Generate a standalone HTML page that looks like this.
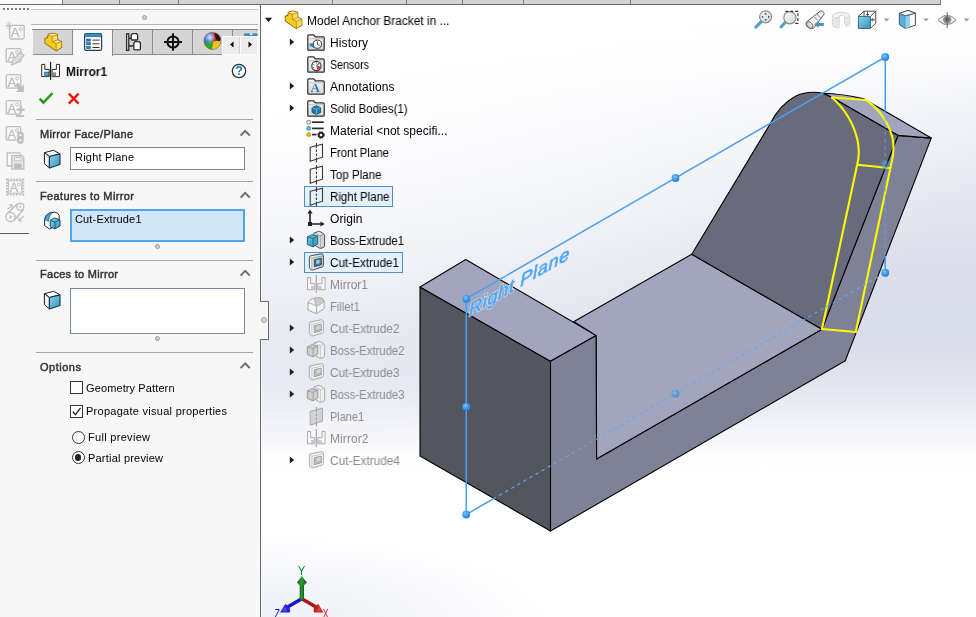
<!DOCTYPE html>
<html lang="en">
<head>
<meta charset="utf-8">
<title>Mirror1 - Model Anchor Bracket</title>
<style>
html,body{margin:0;padding:0;background:#fff;}
body{width:976px;height:617px;overflow:hidden;font-family:"Liberation Sans",sans-serif;}
#app{position:relative;width:976px;height:617px;overflow:hidden;background:#f7f7f7;}
.abs{position:absolute;}
.t{position:absolute;white-space:nowrap;line-height:1;font-size:12px;transform-origin:0 0;will-change:transform;}
#viewport{position:absolute;left:262px;top:5px;width:714px;height:612px;
 background:radial-gradient(ellipse 300px 85px at 0px 612px,rgba(226,229,240,0.55) 0%,rgba(226,229,240,0.3) 50%,rgba(226,229,240,0) 100%),
 radial-gradient(ellipse 730px 340px at 0px 95px,rgba(255,255,255,0.95) 0%,rgba(255,255,255,0.62) 50%,rgba(255,255,255,0.2) 85%,rgba(255,255,255,0) 100%),
 linear-gradient(to bottom,#ffffff 0px,#fcfcfd 55px,#eff1f7 125px,#e4e7f0 195px,#dcdfeb 255px,#d9dce9 330px,#e1e3ee 375px,#f0f1f7 415px,#fcfcfe 450px,#ffffff 470px,#ffffff 612px);}
.sep{position:absolute;left:36px;width:217px;height:1px;background:#a6a6a6;}
.hdr{font-weight:bold;color:#3a3a3a;}
.box{position:absolute;left:70px;width:173px;border:1px solid #7b86a8;background:#fff;}
.tab{position:absolute;top:29px;height:26px;border:1px solid #8c8c8c;border-left:none;background:#d5d5d5;box-sizing:border-box;}
.dot{position:absolute;width:5px;height:5px;border-radius:50%;background:#d0d0d0;border:1px solid #9a9a9a;box-sizing:border-box;}
.cb{position:absolute;left:70px;width:13px;height:13px;box-sizing:border-box;border:1px solid #333;background:#fff;}
.rb{position:absolute;left:71.5px;width:13px;height:13px;box-sizing:border-box;border:1px solid #333;border-radius:50%;background:#fff;}
.sel{position:absolute;box-sizing:border-box;border:1px solid #4d8fc4;background:#e4f0fb;}
svg{position:absolute;overflow:visible;}
</style>
</head>
<body>
<div id="app">
<div id="viewport"></div>
<div class="abs" style="left:0;top:0;width:976px;height:5px;background:#fff;"></div>
<div class="abs" style="left:0;top:0;width:62px;height:4px;background:#f7f7f7;"></div>
<div class="abs" style="left:62px;top:0;width:879px;height:4px;background:#d3d3d3;"></div>
<div class="abs" style="left:62px;top:0;width:1px;height:4px;background:#7d7d7d;"></div>
<div class="abs" style="left:119px;top:0;width:1px;height:4px;background:#7d7d7d;"></div>
<div class="abs" style="left:178px;top:0;width:1px;height:4px;background:#7d7d7d;"></div>
<div class="abs" style="left:332px;top:0;width:1px;height:4px;background:#7d7d7d;"></div>
<div class="abs" style="left:406px;top:0;width:1px;height:4px;background:#7d7d7d;"></div>
<div class="abs" style="left:462px;top:0;width:1px;height:4px;background:#7d7d7d;"></div>
<div class="abs" style="left:523px;top:0;width:1px;height:4px;background:#7d7d7d;"></div>
<div class="abs" style="left:630px;top:0;width:1px;height:4px;background:#7d7d7d;"></div>
<div class="abs" style="left:940px;top:0;width:1px;height:4px;background:#7d7d7d;"></div>
<div class="abs" style="left:0;top:4px;width:941px;height:1px;background:#6e6e6e;"></div>
<div class="abs" style="left:31px;top:5px;width:227px;height:1px;background:#9fc0c8;"></div>
<div class="abs" style="left:0;top:5px;width:261px;height:612px;background:#f7f7f7;"></div>
<div class="abs" style="left:31px;top:6px;width:227px;height:3px;background:#fff;"></div>
<div class="abs" style="left:2.5px;top:7.5px;width:2px;height:2px;background:#7a7a7a;"></div>
<div class="abs" style="left:6.5px;top:7.5px;width:2px;height:2px;background:#7a7a7a;"></div>
<div class="abs" style="left:10.5px;top:7.5px;width:2px;height:2px;background:#7a7a7a;"></div>
<div class="abs" style="left:14.5px;top:7.5px;width:2px;height:2px;background:#7a7a7a;"></div>
<div class="abs" style="left:18.5px;top:7.5px;width:2px;height:2px;background:#7a7a7a;"></div>
<div class="abs" style="left:22.5px;top:7.5px;width:2px;height:2px;background:#7a7a7a;"></div>
<div class="abs" style="left:26.5px;top:7.5px;width:2px;height:2px;background:#7a7a7a;"></div>
<div class="abs" style="left:31px;top:9px;width:227px;height:1px;background:#c4c4c4;"></div>
<div class="abs" style="left:31px;top:24px;width:227px;height:1px;background:#b4b4b4;"></div>
<div class="abs" style="left:31px;top:25px;width:227px;height:4px;background:#fbfbfb;"></div>
<div class="dot" style="left:141.5px;top:14.5px;"></div>
<div class="abs" style="left:0;top:233px;width:29px;height:1px;background:#5a5a5a;"></div>
<svg style="left:0;top:0;" width="976" height="617"><path d="M260.5 5 V301.5 H268.5 V339.5 H260.5 V617" fill="none" stroke="#6a6a6a" stroke-width="1"/><path d="M261 301.5 H268 V339.5 H261 Z" fill="#f7f7f7" stroke="none"/><path d="M260.5 301.5 H268.5 V339.5 H260.5" fill="none" stroke="#6a6a6a" stroke-width="1"/><circle cx="264" cy="320" r="2.6" fill="#cfcfcf" stroke="#999" stroke-width="0.8"/></svg>
<div class="abs" style="left:32px;top:29px;width:226px;height:1px;background:#8c8c8c;"></div>
<div class="tab" style="left:33px;width:40px;"></div>
<div class="tab" style="left:73px;width:40px;background:#f8f8f8;border-bottom:none;height:27px;"></div>
<div class="tab" style="left:113px;width:40px;"></div>
<div class="tab" style="left:153px;width:40px;"></div>
<div class="tab" style="left:193px;width:40px;"></div>
<div class="tab" style="left:233px;width:25px;border-right:none;"></div>
<div class="abs" style="left:222px;top:36px;width:36px;height:19px;background:#ececec;border:1px solid #fcfcfc;box-sizing:border-box;"></div>
<div class="abs" style="left:240px;top:37px;width:1px;height:17px;background:#fcfcfc;"></div>
<div class="abs" style="left:239px;top:37px;width:1px;height:17px;background:#d0d0d0;"></div>
<svg style="left:222px;top:36px;" width="36" height="19"><path d="M11.5 5.5 L8 8.5 L11.5 11.5 Z" fill="#000"/><path d="M26.5 5.5 L30 8.5 L26.5 11.5 Z" fill="#000"/></svg>
<span class="t " style="left:66.00px;top:65.84px;font-size:12px;color:#111;transform:scaleX(0.9916);font-weight:bold;">Mirror1</span>
<span class="t " style="left:40.00px;top:128.69px;font-size:11px;color:#333;letter-spacing:0.349px;-webkit-text-stroke:0.45px #333;">Mirror Face/Plane</span>
<span class="t " style="left:40.00px;top:190.69px;font-size:11px;color:#333;letter-spacing:0.388px;-webkit-text-stroke:0.45px #333;">Features to Mirror</span>
<span class="t " style="left:40.00px;top:268.69px;font-size:11px;color:#333;letter-spacing:0.289px;-webkit-text-stroke:0.45px #333;">Faces to Mirror</span>
<span class="t " style="left:40.00px;top:361.69px;font-size:11px;color:#333;letter-spacing:0.515px;-webkit-text-stroke:0.45px #333;">Options</span>
<div class="sep" style="top:119px;"></div>
<div class="sep" style="top:181px;"></div>
<div class="sep" style="top:260px;"></div>
<div class="sep" style="top:352px;"></div>
<svg style="left:0;top:0;" width="262" height="400"><path d="M240.6 135.6 L245.2 130.89999999999998 L249.8 135.6" fill="none" stroke="#6c6c6c" stroke-width="2"/></svg>
<svg style="left:0;top:0;" width="262" height="400"><path d="M240.6 197.6 L245.2 192.89999999999998 L249.8 197.6" fill="none" stroke="#6c6c6c" stroke-width="2"/></svg>
<svg style="left:0;top:0;" width="262" height="400"><path d="M240.6 275.59999999999997 L245.2 270.9 L249.8 275.59999999999997" fill="none" stroke="#6c6c6c" stroke-width="2"/></svg>
<svg style="left:0;top:0;" width="262" height="400"><path d="M240.6 368.09999999999997 L245.2 363.4 L249.8 368.09999999999997" fill="none" stroke="#6c6c6c" stroke-width="2"/></svg>
<div class="box" style="top:147px;height:21px;"></div>
<span class="t " style="left:74.70px;top:151.99px;font-size:11px;color:#000;letter-spacing:0.213px;">Right Plane</span>
<div class="box" style="top:209px;height:29px;border:2px solid #4fa6ec;background:#d0e5f8;width:171px;"></div>
<span class="t " style="left:74.70px;top:213.99px;font-size:11px;color:#000;letter-spacing:0.154px;">Cut-Extrude1</span>
<div class="box" style="top:288px;height:44px;"></div>
<div class="dot" style="left:154.5px;top:243.5px;"></div>
<div class="dot" style="left:154.5px;top:335.5px;"></div>
<div class="cb" style="top:381px;"></div>
<div class="cb" style="top:405px;"></div>
<svg style="left:70px;top:405px;" width="13" height="13"><path d="M2.8 6.6 L5.3 9.6 L10.6 2.8" fill="none" stroke="#222" stroke-width="1.3"/></svg>
<span class="t " style="left:86.20px;top:382.99px;font-size:11px;color:#000;letter-spacing:0.113px;">Geometry Pattern</span>
<span class="t " style="left:85.70px;top:405.99px;font-size:11px;color:#000;letter-spacing:0.273px;">Propagate visual properties</span>
<div class="rb" style="top:430.5px;"></div>
<div class="rb" style="top:451px;"></div>
<div class="abs" style="left:74.7px;top:454.2px;width:6.6px;height:6.6px;border-radius:50%;background:#222;"></div>
<span class="t " style="left:88.20px;top:431.99px;font-size:11px;color:#000;letter-spacing:0.302px;">Full preview</span>
<span class="t " style="left:88.20px;top:452.99px;font-size:11px;color:#000;letter-spacing:0.205px;">Partial preview</span>
<svg id="panelicons" style="left:0;top:0;" width="976" height="617" viewBox="0 0 976 617">
<defs>
<linearGradient id="pcube" x1="0" y1="0" x2="1" y2="1"><stop offset="0" stop-color="#8fd0ea"/><stop offset="1" stop-color="#3a93c0"/></linearGradient>
<linearGradient id="pyel" x1="0" y1="0" x2="1" y2="1"><stop offset="0" stop-color="#ffe96e"/><stop offset="1" stop-color="#e6ae08"/></linearGradient>
<linearGradient id="lens" x1="0" y1="0" x2="1" y2="1"><stop offset="0" stop-color="#ffffff"/><stop offset="1" stop-color="#cfd6dc"/></linearGradient>
<radialGradient id="ballhi" cx="35%" cy="30%" r="70%"><stop offset="0" stop-color="#ffffff" stop-opacity="0.85"/><stop offset="0.5" stop-color="#ffffff" stop-opacity="0"/></radialGradient>
</defs>
<rect x="9.6" y="25.4" width="14.6" height="13.6" rx="1.5" fill="#f7f7f7" stroke="#bebebe" stroke-width="1.3"/>
<text x="10.799999999999999" y="37.3" font-family="Liberation Sans, sans-serif" font-size="13" fill="#bebebe" stroke="#bebebe" stroke-width="0.3">A</text>
<circle cx="20.6" cy="29.2" r="1.6" fill="#f7f7f7" stroke="#bebebe" stroke-width="1"/>
<path d="M9 21.6 V30.4 M5.2 25.6 H12.8 M6.4 23 L11.6 28.2 M11.6 23 L6.4 28.2" stroke="#bebebe" stroke-width="0.9" fill="none"/>
<rect x="6.2" y="48.6" width="14.6" height="13.6" rx="1.5" fill="#f7f7f7" stroke="#bebebe" stroke-width="1.3"/>
<text x="7.4" y="60.5" font-family="Liberation Sans, sans-serif" font-size="13" fill="#bebebe" stroke="#bebebe" stroke-width="0.3">A</text>
<circle cx="17.2" cy="52.4" r="1.6" fill="#f7f7f7" stroke="#bebebe" stroke-width="1"/>
<path d="M11.6 64.8 L13 59.6 L20.6 52.6 L24 55.6 L16.6 63 Z" fill="#dedede" stroke="#bebebe" stroke-width="1.2"/>
<rect x="6.2" y="74.6" width="14.6" height="13.6" rx="1.5" fill="#f7f7f7" stroke="#bebebe" stroke-width="1.3"/>
<text x="7.4" y="86.5" font-family="Liberation Sans, sans-serif" font-size="13" fill="#bebebe" stroke="#bebebe" stroke-width="0.3">A</text>
<circle cx="17.2" cy="78.39999999999999" r="1.6" fill="#f7f7f7" stroke="#bebebe" stroke-width="1"/>
<path d="M15.6 84.8 L17.8 82.6 L21.6 86.4 L23.8 84.2 V92 H16 L18.2 89.8 Z" fill="#bebebe"/>
<rect x="6.2" y="100.6" width="14.6" height="13.6" rx="1.5" fill="#f7f7f7" stroke="#bebebe" stroke-width="1.3"/>
<text x="7.4" y="112.5" font-family="Liberation Sans, sans-serif" font-size="13" fill="#bebebe" stroke="#bebebe" stroke-width="0.3">A</text>
<circle cx="17.2" cy="104.39999999999999" r="1.6" fill="#f7f7f7" stroke="#bebebe" stroke-width="1"/>
<path d="M20.6 105.6 V113.6 M16.6 109.6 H24.6 M15.8 116 H24.2" stroke="#bebebe" stroke-width="2.1" fill="none"/>
<rect x="6.2" y="126.6" width="14.6" height="13.6" rx="1.5" fill="#f7f7f7" stroke="#bebebe" stroke-width="1.3"/>
<text x="7.4" y="138.5" font-family="Liberation Sans, sans-serif" font-size="13" fill="#bebebe" stroke="#bebebe" stroke-width="0.3">A</text>
<circle cx="17.2" cy="130.4" r="1.6" fill="#f7f7f7" stroke="#bebebe" stroke-width="1"/>
<rect x="17.2" y="131.4" width="6.4" height="12.4" rx="2.8" fill="#bebebe"/><circle cx="20.4" cy="135" r="1.2" fill="#ececec"/><circle cx="20.4" cy="140.2" r="1.2" fill="#ececec"/>
<path d="M11 166 H7.2 V152.8 H20 V155" fill="none" stroke="#bebebe" stroke-width="1.3"/>
<path d="M11.8 155.6 H22 L23.8 157.4 V169 H11.8 Z" fill="#e6e6e6" stroke="#bebebe" stroke-width="1.3"/><rect x="14.4" y="157.6" width="6.6" height="3.2" fill="#f4f4f4" stroke="#bebebe" stroke-width="0.8"/><rect x="14" y="163.6" width="7.6" height="5" fill="#bebebe"/>
<rect x="7.2" y="179.6" width="15.8" height="14.8" fill="#f7f7f7" stroke="#bebebe" stroke-width="2.4" stroke-dasharray="1.7 1.3"/>
<rect x="8.4" y="180.8" width="13.4" height="12.4" fill="#f7f7f7" stroke="#bebebe" stroke-width="0.9"/>
<text x="9.8" y="192.4" font-family="Liberation Sans, sans-serif" font-size="12.5" fill="#bebebe" stroke="#bebebe" stroke-width="0.3">A</text>
<circle cx="18.8" cy="184.6" r="1.5" fill="#f7f7f7" stroke="#bebebe" stroke-width="0.9"/>
<path d="M6.8 213.8 L17.6 203.8 M13.6 221 L23.6 209.2" stroke="#bebebe" stroke-width="1.4" fill="none"/>
<circle cx="10.5" cy="217" r="4.6" fill="#f7f7f7" stroke="#bebebe" stroke-width="1.4"/><circle cx="10.5" cy="217" r="1.3" fill="#bebebe"/>
<circle cx="20.3" cy="206.8" r="3.5" fill="#f7f7f7" stroke="#bebebe" stroke-width="1.4"/><circle cx="20.3" cy="206.8" r="1.1" fill="#bebebe"/>
<path d="M7.3 209.7 L12.2 204.8 M12.2 204.8 H8.8 M12.2 204.8 V208.2 M24 215.9 L18.8 221 M18.8 221 H22.2 M18.8 221 V217.6" stroke="#bebebe" stroke-width="1.1" fill="none"/>
<use href="#part" x="41.8" y="30.2" width="24" height="24"/>
<g transform="translate(84,33)"><rect x="0.6" y="0.6" width="17" height="16.8" rx="1.6" fill="#fdfdfd" stroke="#1f3f55" stroke-width="1.2"/><path d="M0.6 2.2 Q0.6 0.6 2.2 0.6 H16 Q17.6 0.6 17.6 2.2 V3.6 H0.6 Z" fill="#3c8fc0" stroke="#1f5f88" stroke-width="0.8"/>
<rect x="2.6" y="6.0" width="4" height="2.2" fill="#2f86bb" stroke="#1b4f70" stroke-width="0.5"/><path d="M8.4 7.1 H15.6" stroke="#333" stroke-width="1"/>
<rect x="2.6" y="9.7" width="4" height="2.2" fill="#2f86bb" stroke="#1b4f70" stroke-width="0.5"/><path d="M8.4 10.799999999999999 H15.6" stroke="#333" stroke-width="1"/>
<rect x="2.6" y="13.4" width="4" height="2.2" fill="#2f86bb" stroke="#1b4f70" stroke-width="0.5"/><path d="M8.4 14.5 H15.6" stroke="#333" stroke-width="1"/>
</g>
<g fill="#fff" stroke="#2b2b2b" stroke-width="1.3"><rect x="126.6" y="33.8" width="2.2" height="16.6" fill="#f0f0f0"/><path d="M128.8 38.4 H131.4 M128.8 46 H134" fill="none"/><path d="M131.2 35.2 L132.4 33.6 H136.6 L137.6 35 V39.2 Q137.6 40 136.8 40 H132 Q131.2 40 131.2 39.2 Z"/><path d="M133.8 43.2 L135 41.6 H139.4 L140.4 43 V48.8 Q140.4 49.8 139.4 49.8 H134.8 Q133.8 49.8 133.8 48.8 Z"/></g>
<g fill="none" stroke="#111" stroke-width="2"><circle cx="173" cy="42" r="5.6"/><path d="M164 42 H182 M173 33.2 V50.8"/></g>
<g><clipPath id="ballclip"><circle cx="212.5" cy="40.8" r="8.6"/></clipPath><g clip-path="url(#ballclip)"><rect x="203" y="31" width="20" height="20" fill="#d81e1e"/><path d="M203 31 H212 L213.5 42 L203 43 Z" fill="#2a66d8"/><path d="M203 42.5 L213.5 41.5 L212 51 H203 Z" fill="#2fa52f"/><path d="M213.5 41.5 L223 40 V51 H211.5 Z" fill="#f1c40f"/><ellipse cx="217.6" cy="37" rx="2.4" ry="4.4" transform="rotate(-25 217.6 37)" fill="#1a1a1a"/><circle cx="212.5" cy="40.8" r="8.6" fill="url(#ballhi)"/></g><circle cx="212.5" cy="40.8" r="8.6" fill="none" stroke="#7a7a7a" stroke-width="0.6"/></g>
<path d="M244 33.4 H257.5 V36 H244 Z" fill="#3c8fc0"/><path d="M250 33.4 H252.4 V35 H250Z" fill="#fff"/>
<g transform="translate(41.2,61.6) scale(1.0)"><path d="M9.4 0.3 V18.3" stroke="#111" stroke-width="1.1" fill="none"/><path d="M0.5 2.8 H3.6 V7.8 H8 V15 H0.5 Z" fill="#fcfcfc" stroke="#2b2b2b" stroke-width="1"/><rect x="3.6" y="10.6" width="4" height="4" fill="#4aa3d2" stroke="#1b5d82" stroke-width="0.8"/><path d="M18.3 2.8 H15.2 V7.8 H10.9 V15 H18.3 Z" fill="#fcfcfc" stroke="#2b2b2b" stroke-width="1"/><rect x="11.3" y="10.8" width="3.6" height="3.8" fill="#8a8a8a"/></g>
<circle cx="239" cy="71" r="6.7" fill="#fdfdfd" stroke="#1f2d3a" stroke-width="1.2"/>
<text x="235.3" y="75.4" font-family="Liberation Sans, sans-serif" font-weight="bold" font-size="12.5" fill="#1f6fa8">?</text>
<path d="M39.8 98.6 L43.4 102.6 L52.4 93.2" fill="none" stroke="#2f9a12" stroke-width="2.5"/>
<path d="M68.8 93.6 L78.6 103.6 M78.6 93.6 L68.8 103.6" fill="none" stroke="#e11c0c" stroke-width="2.4"/>
<g transform="translate(44,149.9)" stroke-linejoin="round"><path d="M0.4 2.8 L9.6 0.4 L16 4 L5.4 6.6 Z" fill="#ffffff" stroke="#1e1e1e" stroke-width="1"/><path d="M0.4 2.8 L5.4 6.6 V18 L0.4 13.8 Z" fill="#f2f2f2" stroke="#1e1e1e" stroke-width="1"/><path d="M5.4 6.6 L16 4 V14.6 L5.4 18 Z" fill="url(#pcube)" stroke="#12384e" stroke-width="1.1"/></g>
<g transform="translate(44,290.9)" stroke-linejoin="round"><path d="M0.4 2.8 L9.6 0.4 L16 4 L5.4 6.6 Z" fill="#ffffff" stroke="#1e1e1e" stroke-width="1"/><path d="M0.4 2.8 L5.4 6.6 V18 L0.4 13.8 Z" fill="#f2f2f2" stroke="#1e1e1e" stroke-width="1"/><path d="M5.4 6.6 L16 4 V14.6 L5.4 18 Z" fill="url(#pcube)" stroke="#12384e" stroke-width="1.1"/></g>
<g transform="translate(44,211.6)" stroke-linejoin="round"><path d="M0.6 8 Q0.8 3.4 5 1.6 L10.6 0.5 Q14.6 1 15.2 4 V12.6 L5.6 17.4 L0.6 14 Z" fill="#fbfbfb" stroke="#2a2a2a" stroke-width="1"/><path d="M0.9 8 Q1.2 3.6 5 1.8 L8.4 1.1 Q4.6 3.4 4.4 9.6 Z" fill="#4aa6d6" stroke="#1b5d82" stroke-width="0.8"/><path d="M6.2 8.8 L10.6 6.4 L16 8.2 V14.4 L11 17.2 L6.2 15.4 Z" fill="url(#pcube)" stroke="#12506e" stroke-width="1"/><path d="M6.2 8.8 L11 10.6 L16 8.2 M11 10.6 V17.2" fill="none" stroke="#12506e" stroke-width="0.9"/></g>
<g><path d="M761.4 21.4 L755.8 27.2" stroke="#4f9cc4" stroke-width="3" stroke-linecap="round"/><circle cx="765.6" cy="16.8" r="6" fill="url(#lens)" stroke="#8b8b8b" stroke-width="1.2"/><path d="M765.6 12.6 L767 14.4 H764.2 Z M765.6 21 L767 19.2 H764.2 Z M761.4 16.8 L763.2 15.4 V18.2 Z M769.8 16.8 L768 15.4 V18.2 Z" fill="#444"/></g>
<g><path d="M785.8 21.8 L781 27" stroke="#4f9cc4" stroke-width="3" stroke-linecap="round"/><circle cx="789.9" cy="17.7" r="6.1" fill="url(#lens)" stroke="#8b8b8b" stroke-width="1.2"/><path d="M785.4 11.4 H797.9 V23.4 H794" fill="none" stroke="#333" stroke-width="1.1" stroke-dasharray="3 1.8"/></g>
<g><path d="M806.3 22 L820.4 11 Q822.6 10.6 823.6 12.2 Q824.6 13.4 823.8 14.6 L813.6 28.2 Q810 29.6 807.4 27 Q805.2 24.6 806.3 22 Z" fill="#f4f4f4" stroke="#5a5a5a" stroke-width="1"/><path d="M813.4 16.4 L818.2 20.6 M816.6 14 L821 18" stroke="#7a7a7a" stroke-width="0.9" fill="none"/><ellipse cx="809.8" cy="25" rx="2.5" ry="3.7" transform="rotate(-42 809.8 25)" fill="#dcdcdc" stroke="#6a6a6a" stroke-width="0.9"/><path d="M814 24.4 L818.6 21 V22.9 H823.8 V25.9 H818.6 V27.8 Z" fill="#4a94b8"/></g>
<g stroke="#d6d6d6" stroke-width="1"><path d="M832.4 16.4 Q833 12.6 841 12.2 Q849.4 12.6 849.8 16.4 V24.2 Q849.2 26 846 26.6 V24 H844.6 V17 Q844 15.4 841.4 15.4 Q839.4 15.4 839.2 17 V27.6 Q834 28.4 832.4 25 Z" fill="#f2f2f2"/><path d="M833.4 21 L838.4 17.2 M833.4 24 L838.4 20.2 M834.2 26.6 L838.6 23.2 M845.4 19.8 L849 17 M845.4 22.8 L849 20 M845.6 25.6 L849 23" fill="none" stroke="#dadada" stroke-width="1.2"/><path d="M832.4 16.4 Q836 19.2 839.2 18.4 M844.6 17.6 Q848 17.8 849.8 16.4" fill="none"/></g>
<g stroke-linejoin="round"><path d="M858.4 16.4 L864 11.2 H875.8 V23.2 L870.4 28.4" fill="#fdfdfd" stroke="#4a4a4a" stroke-width="1"/><path d="M870.4 16.4 L875.8 11.2 M864 11.2 V16" stroke="#4a4a4a" stroke-width="1" fill="none"/><rect x="858.4" y="16.4" width="12" height="12" fill="url(#pcube)" stroke="#2b6a8a" stroke-width="1"/><path d="M867.6 12 V15.4 M866.2 14 L867.6 15.6 L869 14 M875 19.8 H871.6 M873 18.4 L871.4 19.8 L873 21.2" stroke="#333" stroke-width="0.9" fill="none"/></g>
<g stroke-linejoin="round"><path d="M899.4 13.4 L908 10.4 L915.4 13.2 V25.2 L905.4 28.4 L899.4 24.6 Z" fill="#fafafa" stroke="#4a4a4a" stroke-width="1"/><path d="M899.4 13.4 L905.4 15.8 V28.4 L899.4 24.6 Z" fill="#5aaed8" stroke="#2b6a8a" stroke-width="0.8"/><path d="M905.4 15.8 L910 14.6 V26.8 L905.4 28.4 Z" fill="#8fd0ea"/><path d="M905.4 15.8 L915.4 13.2" stroke="#4a4a4a" stroke-width="0.9" fill="none"/><path d="M899.4 13.4 L908 10.4 L915.4 13.2 L905.4 15.8 Z" fill="#e4f2f9" stroke="#4a4a4a" stroke-width="0.8"/></g>
<g><path d="M938.4 20 Q947 10.4 955.8 20 Q947 29 938.4 20 Z" fill="#f2f2f2" stroke="#9c9c9c" stroke-width="1.1"/><circle cx="947.2" cy="19.6" r="4.2" fill="#8f8f8f"/><circle cx="947.2" cy="19.6" r="2" fill="#5c5c5c"/><path d="M947.2 12 V28.2" stroke="#6a6a6a" stroke-width="1"/></g>
<path d="M883.7 18.6 H889.3 L886.5 21.6 Z" fill="#9a9a9a"/>
<path d="M923.2 18.6 H928.8 L926 21.6 Z" fill="#9a9a9a"/>
<path d="M963.7 18.6 H969.3 L966.5 21.6 Z" fill="#9a9a9a"/>
</svg>
<div class="sel" style="left:304px;top:186px;width:89px;height:21px;"></div>
<div class="sel" style="left:304px;top:252px;width:98.5px;height:21px;"></div>
<span class="t " style="left:307.00px;top:14.84px;font-size:12px;color:#000;transform:scaleX(0.9937);">Model Anchor Bracket in ...</span>
<span class="t " style="left:330.00px;top:36.84px;font-size:12px;color:#000;letter-spacing:0.111px;">History</span>
<span class="t " style="left:330.00px;top:58.84px;font-size:12px;color:#000;transform:scaleX(0.8859);">Sensors</span>
<span class="t " style="left:330.00px;top:80.84px;font-size:12px;color:#000;letter-spacing:0.112px;">Annotations</span>
<span class="t " style="left:330.00px;top:102.84px;font-size:12px;color:#000;transform:scaleX(0.9524);">Solid Bodies(1)</span>
<span class="t " style="left:330.00px;top:124.84px;font-size:12px;color:#000;letter-spacing:0.019px;">Material &lt;not specifi...</span>
<span class="t " style="left:330.00px;top:146.84px;font-size:12px;color:#000;transform:scaleX(0.9511);">Front Plane</span>
<span class="t " style="left:330.00px;top:168.84px;font-size:12px;color:#000;transform:scaleX(0.9649);">Top Plane</span>
<span class="t " style="left:330.00px;top:190.84px;font-size:12px;color:#000;transform:scaleX(0.9591);">Right Plane</span>
<span class="t " style="left:330.00px;top:212.84px;font-size:12px;color:#000;letter-spacing:0.098px;">Origin</span>
<span class="t " style="left:330.00px;top:234.84px;font-size:12px;color:#000;transform:scaleX(0.9402);">Boss-Extrude1</span>
<span class="t " style="left:330.00px;top:256.84px;font-size:12px;color:#000;transform:scaleX(0.9760);">Cut-Extrude1</span>
<span class="t " style="left:330.00px;top:278.84px;font-size:12px;color:#8c8c8c;">Mirror1</span>
<span class="t " style="left:330.00px;top:300.84px;font-size:12px;color:#8c8c8c;transform:scaleX(0.9373);">Fillet1</span>
<span class="t " style="left:330.00px;top:322.84px;font-size:12px;color:#8c8c8c;transform:scaleX(0.9830);">Cut-Extrude2</span>
<span class="t " style="left:330.00px;top:344.84px;font-size:12px;color:#8c8c8c;transform:scaleX(0.9466);">Boss-Extrude2</span>
<span class="t " style="left:330.00px;top:366.84px;font-size:12px;color:#8c8c8c;transform:scaleX(0.9830);">Cut-Extrude3</span>
<span class="t " style="left:330.00px;top:388.84px;font-size:12px;color:#8c8c8c;transform:scaleX(0.9466);">Boss-Extrude3</span>
<span class="t " style="left:330.00px;top:410.84px;font-size:12px;color:#8c8c8c;transform:scaleX(0.9100);">Plane1</span>
<span class="t " style="left:330.00px;top:432.84px;font-size:12px;color:#8c8c8c;letter-spacing:0.083px;">Mirror2</span>
<span class="t " style="left:330.00px;top:454.84px;font-size:12px;color:#8c8c8c;transform:scaleX(0.9901);">Cut-Extrude4</span>
<svg id="treeicons" style="left:0;top:0;" width="976" height="617" viewBox="0 0 976 617">
<defs>
<linearGradient id="fg" x1="0" y1="0" x2="0" y2="1"><stop offset="0" stop-color="#fafafa"/><stop offset="1" stop-color="#d6d6d6"/></linearGradient>
<linearGradient id="cubeg" x1="0" y1="0" x2="1" y2="1"><stop offset="0" stop-color="#7cc6e4"/><stop offset="1" stop-color="#2c8fbd"/></linearGradient>
<linearGradient id="plateg" x1="0" y1="0" x2="1" y2="0"><stop offset="0" stop-color="#ffffff"/><stop offset="1" stop-color="#c9c9c9"/></linearGradient>
<linearGradient id="yel" x1="0" y1="0" x2="1" y2="1"><stop offset="0" stop-color="#ffe86a"/><stop offset="1" stop-color="#e9b40c"/></linearGradient>
<symbol id="folder" viewBox="0 0 18 17" overflow="visible">
 <path d="M0.6 15.6 V1.8 Q0.6 0.7 1.7 0.7 H6 Q7 0.7 7.6 1.6 L8.2 2.6 H16.3 Q17.4 2.6 17.4 3.7 V15.6 Q17.4 16.3 16.6 16.3 H1.4 Q0.6 16.3 0.6 15.6 Z" fill="url(#fg)" stroke="#333" stroke-width="1.3"/>
 <path d="M1.6 4.6 H16.4" stroke="#bdbdbd" stroke-width="1" fill="none"/>
</symbol>
<symbol id="plane" viewBox="0 0 18 20" overflow="visible">
 <path d="M3.2 4.5 L15.5 1.3 V14.4 L3.2 18.4 Z" fill="none" stroke="#3a3a3a" stroke-width="1.1"/>
 <path d="M9.4 0.2 V5.2 M9.4 6.8 V9.2 M9.4 10.8 V13.2 M9.4 14.6 V19.6" stroke="#3a3a3a" stroke-width="1.1" fill="none"/>
</symbol>
<symbol id="planeg" viewBox="0 0 18 20" overflow="visible">
 <path d="M3.2 4.5 L15.5 1.3 V14.4 L3.2 18.4 Z" fill="#d2d2d2" stroke="#aaaaaa" stroke-width="1"/>
 <path d="M9.4 0.2 V5.2 M9.4 6.8 V9.2 M9.4 10.8 V13.2 M9.4 14.6 V19.6" stroke="#9c9c9c" stroke-width="1" fill="none"/>
</symbol>
<symbol id="boss" viewBox="0 0 19 19" overflow="visible">
 <path d="M7.2 2.2 L12.4 0.6 Q13 0.4 13.6 0.8 L17.6 3.4 Q18.2 3.8 18.2 4.6 V15.6 Q18.2 16.3 17.6 16.6 L14.4 18 Q13.8 18.2 13.2 17.8 L7.2 14 Z" fill="url(#plateg)" stroke="#4a4a4a" stroke-width="1"/>
 <path d="M13.8 5.2 V17.6 M13.8 5.2 L17.8 3.6 M13.8 5.2 L8 2.4" fill="none" stroke="#8a8a8a" stroke-width="0.8"/>
 <path d="M0.6 6.2 L5.2 4 L11.2 5.4 V13.6 L6.4 16.4 L0.6 14 Z" fill="url(#cubeg)" stroke="#1d5f80" stroke-width="1"/>
 <path d="M0.6 6.2 L6.4 7.8 L11.2 5.4 M6.4 7.8 V16.4" fill="none" stroke="#1d5f80" stroke-width="0.9"/>
</symbol>
<symbol id="bossg" viewBox="0 0 19 19" overflow="visible">
 <path d="M7.2 2.2 L12.4 0.6 Q13 0.4 13.6 0.8 L17.6 3.4 Q18.2 3.8 18.2 4.6 V15.6 Q18.2 16.3 17.6 16.6 L14.4 18 Q13.8 18.2 13.2 17.8 L7.2 14 Z" fill="#f1f1f1" stroke="#a6a6a6" stroke-width="1"/>
 <path d="M13.8 5.2 V17.6 M13.8 5.2 L17.8 3.6 M13.8 5.2 L8 2.4" fill="none" stroke="#b8b8b8" stroke-width="0.8"/>
 <path d="M0.6 6.2 L5.2 4 L11.2 5.4 V13.6 L6.4 16.4 L0.6 14 Z" fill="#cfcfcf" stroke="#9a9a9a" stroke-width="1"/>
 <path d="M0.6 6.2 L6.4 7.8 L11.2 5.4 M6.4 7.8 V16.4" fill="none" stroke="#9a9a9a" stroke-width="0.9"/>
</symbol>
<symbol id="cut" viewBox="0 0 16 18" overflow="visible">
 <path d="M0.8 4 Q0.8 3 1.8 2.7 L12.8 0.6 Q14 0.4 14.6 1.2 Q15.2 1.8 15.2 2.8 V12.6 Q15.2 13.6 14.2 14 L4.2 17.2 Q3.2 17.5 2.4 16.8 L1.4 15.8 Q0.8 15.2 0.8 14.2 Z" fill="url(#plateg)" stroke="#4a4a4a" stroke-width="1"/>
 <path d="M3.4 5.2 L14.4 2.8 M3.4 5.2 V16.8 M3.4 5.2 L1.2 3.2" fill="none" stroke="#8a8a8a" stroke-width="0.8"/>
 <path d="M5.8 6.6 L13 5.2 V11.8 L5.8 13.8 Z" fill="#3b9ac9" stroke="#3d3d3d" stroke-width="1"/>
 <path d="M7.6 7.4 V11.6 L11 10.8 V6.8 Z" fill="#9bd2ea" stroke="none"/>
 <path d="M7.4 6.4 V11.8 L12.8 10.4" fill="none" stroke="#1d5f80" stroke-width="0.8"/>
</symbol>
<symbol id="cutg" viewBox="0 0 16 18" overflow="visible">
 <path d="M0.8 4 Q0.8 3 1.8 2.7 L12.8 0.6 Q14 0.4 14.6 1.2 Q15.2 1.8 15.2 2.8 V12.6 Q15.2 13.6 14.2 14 L4.2 17.2 Q3.2 17.5 2.4 16.8 L1.4 15.8 Q0.8 15.2 0.8 14.2 Z" fill="#f3f3f3" stroke="#a8a8a8" stroke-width="1"/>
 <path d="M3.4 5.2 L14.4 2.8 M3.4 5.2 V16.8 M3.4 5.2 L1.2 3.2" fill="none" stroke="#bcbcbc" stroke-width="0.8"/>
 <path d="M5.8 6.6 L13 5.2 V11.8 L5.8 13.8 Z" fill="#d4d4d4" stroke="#9a9a9a" stroke-width="1"/>
 <path d="M7.4 6.4 V11.8 L12.8 10.4" fill="none" stroke="#9a9a9a" stroke-width="0.8"/>
</symbol>
<symbol id="mirg" viewBox="0 0 19 19" overflow="visible">
 <path d="M9.4 0.5 V18.7" stroke="#9a9a9a" stroke-width="1" fill="none"/>
 <path d="M0.5 3.2 H3.6 V9.4 H7.8 V15.5 H0.5 Z" fill="#fafafa" stroke="#a8a8a8" stroke-width="1"/>
 <rect x="4" y="11.6" width="3.4" height="3.6" fill="#c9c9c9"/>
 <path d="M18.3 3.2 H15.2 V9.4 H11 V15.5 H18.3 Z" fill="#fafafa" stroke="#a8a8a8" stroke-width="1"/>
 <rect x="11.4" y="11.6" width="3.4" height="3.6" fill="#c9c9c9"/>
</symbol>
<symbol id="mir" viewBox="0 0 19 19" overflow="visible">
 <path d="M9.4 0.5 V18.7" stroke="#222" stroke-width="1.1" fill="none"/>
 <path d="M0.5 3.2 H3.6 V9.4 H7.8 V15.5 H0.5 Z" fill="#fcfcfc" stroke="#333" stroke-width="1"/>
 <rect x="4" y="11.4" width="3.4" height="3.7" fill="#3f97c8"/>
 <path d="M18.3 3.2 H15.2 V9.4 H11 V15.5 H18.3 Z" fill="#fcfcfc" stroke="#333" stroke-width="1"/>
 <rect x="11.4" y="11.4" width="3.4" height="3.7" fill="#8a8a8a"/>
</symbol>
<symbol id="filg" viewBox="0 0 18 18" overflow="visible">
 <path d="M0.8 6 Q2 1.6 8 0.9 L13.4 0.7 Q17 1.4 17.4 4.6 V11.6 L9.6 16.9 L0.8 13.2 Z" fill="#f4f4f4" stroke="#a6a6a6" stroke-width="1"/>
 <path d="M8 0.9 Q6.6 3.2 9.6 9.4 L17.4 4.8 Q16.6 1.4 13.4 0.7 Z" fill="#cdcdcd" stroke="#a6a6a6" stroke-width="0.8"/>
 <path d="M0.8 6.2 Q4 5.6 9.6 9.4 V16.9" fill="none" stroke="#a6a6a6" stroke-width="0.9"/>
</symbol>
<symbol id="part" viewBox="0 0 24 24" overflow="visible">
 <polygon points="3.31,8.37 6.03,7.39 6.23,5.06 7.39,3.81 11.09,3.11 15.56,4.28 15.76,9.65 19.65,11.28 19.84,17.12 14.40,20.62 3.31,12.84" fill="#f3c21a" stroke="#8a6200" stroke-width="1.2" stroke-linejoin="round"/>
 <polygon points="3.58,8.64 6.23,7.70 6.42,5.25 10.43,6.42 10.43,11.36 14.32,13.15 14.40,20.31 3.58,12.68" fill="#f6cb1e"/>
 <polygon points="6.61,4.98 7.47,3.97 11.09,3.35 15.41,4.40 10.43,6.23" fill="#ffe98a"/>
 <polygon points="10.43,6.42 15.49,4.51 15.56,9.73 11.28,11.36 10.43,11.36" fill="#fbe060"/>
 <polygon points="11.28,11.36 15.56,9.81 19.46,11.36 14.32,13.07" fill="#ffec96"/>
 <polygon points="14.32,13.15 19.57,11.44 19.65,17.04 14.40,20.39" fill="#f9dc50"/>
 <path d="M6.42 5.25 L10.43 6.34 V11.36 L14.32 13.11 V20.31 M10.43 6.34 L15.49 4.44 M14.32 13.11 L19.57 11.40 M10.89 11.36 L15.56 9.77" fill="none" stroke="#a87c08" stroke-width="0.7"/>
</symbol>
</defs>
<path d="M264.8 17.8 H272.2 L268.5 21.9 Z" fill="#1e1e1e"/>
<use href="#part" x="282" y="8" width="24" height="24"/>
<path d="M289.8 38.4 L294.2 42 L289.8 45.6 Z" fill="#1e1e1e"/>
<use href="#folder" x="307" y="34.3" width="18" height="16.6"/>
<circle cx="317.4" cy="44.2" r="4.1" fill="#fff" stroke="#333" stroke-width="1"/>
<path d="M317.4 41.6 V44.4 L319.6 45.4" fill="none" stroke="#333" stroke-width="0.9"/>
<path d="M309.4 43.6 L313.6 43.2 L312.6 44.8 Q314.2 47 316.4 48.4 Q312.6 48.2 311 46 L310 47 Z" fill="#2a7fc0"/>
<use href="#folder" x="307" y="56.3" width="18" height="16.6"/>
<circle cx="316.4" cy="66" r="4.6" fill="#fff" stroke="#333" stroke-width="1.1"/>
<path d="M316.4 66 L320 62.4" stroke="#2a7fc0" stroke-width="1.3" fill="none"/>
<path d="M316.4 66 L320.6 66.6 A4.4 4.4 0 0 1 317.6 70.2 Z" fill="#e02c10"/>
<path d="M313.2 64.4 L314.4 65 M316.4 62.4 V63.6 M313 67.6 L314.2 67.2" stroke="#333" stroke-width="0.8" fill="none"/>
<path d="M289.8 82.4 L294.2 86 L289.8 89.6 Z" fill="#1e1e1e"/>
<use href="#folder" x="307" y="78.3" width="18" height="16.6"/>
<text x="310.6" y="92.3" font-family="Liberation Serif, serif" font-weight="bold" font-size="13" fill="#2b7cb3">A</text>
<path d="M289.8 104.4 L294.2 108 L289.8 111.6 Z" fill="#1e1e1e"/>
<use href="#folder" x="307" y="100.3" width="18" height="16.6"/>
<path d="M312 107.6 L316.4 105.8 L320.6 107.6 V112.4 L316.4 114.6 L312 112.4 Z" fill="#1f7cab" stroke="#14506e" stroke-width="0.9"/>
<path d="M312 107.6 L316.4 109.4 L320.6 107.6 M316.4 109.4 V114.6" fill="none" stroke="#7cc3e2" stroke-width="0.8"/>
<circle cx="308.7" cy="122.2" r="1.9" fill="#ffffff" stroke="#555" stroke-width="0.8"/>
<path d="M312 122.2 H323.8" stroke="#2b2b2b" stroke-width="1.7" fill="none"/>
<circle cx="308.7" cy="128.4" r="1.9" fill="#6ec0ec" stroke="#1d6f9e" stroke-width="0.8"/>
<path d="M312 128.4 H323.8" stroke="#2b2b2b" stroke-width="1.7" fill="none"/>
<circle cx="308.7" cy="134.6" r="1.9" fill="#f5c400" stroke="#a07a00" stroke-width="0.8"/>
<path d="M312 134.6 H316.5" stroke="#2b2b2b" stroke-width="1.7" fill="none"/>
<circle cx="321" cy="135" r="2.6" fill="none" stroke="#222" stroke-width="2.2" stroke-dasharray="1.35 0.7"/>
<circle cx="321" cy="135" r="2.2" fill="none" stroke="#222" stroke-width="1.4"/>
<use href="#plane" x="307" y="142.8" width="18" height="20"/>
<use href="#plane" x="307" y="164.8" width="18" height="20"/>
<use href="#plane" x="307" y="186.8" width="18" height="20"/>
<path d="M310 213 V224 H321" fill="none" stroke="#222" stroke-width="1.6"/>
<path d="M310 209.4 L312.6 213.6 H307.4 Z M324.8 224 L320.4 226.6 V221.4 Z" fill="#222"/>
<rect x="308" y="222" width="4" height="4" fill="#222"/>
<path d="M289.8 236.4 L294.2 240 L289.8 243.6 Z" fill="#1e1e1e"/>
<use href="#boss" x="306.8" y="230.8" width="18.6" height="18.6"/>
<path d="M289.8 258.4 L294.2 262 L289.8 265.6 Z" fill="#1e1e1e"/>
<use href="#cut" x="308.6" y="253.2" width="15.6" height="17.6"/>
<use href="#mirg" x="307" y="274.4" width="18.8" height="18.8"/>
<use href="#filg" x="307.2" y="297.2" width="17.6" height="17.6"/>
<path d="M289.8 324.4 L294.2 328 L289.8 331.6 Z" fill="#1e1e1e"/>
<use href="#cutg" x="308.6" y="319.2" width="15.6" height="17.6"/>
<path d="M289.8 346.4 L294.2 350 L289.8 353.6 Z" fill="#1e1e1e"/>
<use href="#bossg" x="306.8" y="340.8" width="18.6" height="18.6"/>
<path d="M289.8 368.4 L294.2 372 L289.8 375.6 Z" fill="#1e1e1e"/>
<use href="#cutg" x="308.6" y="363.2" width="15.6" height="17.6"/>
<path d="M289.8 390.4 L294.2 394 L289.8 397.6 Z" fill="#1e1e1e"/>
<use href="#bossg" x="306.8" y="384.8" width="18.6" height="18.6"/>
<use href="#planeg" x="307" y="406.8" width="18" height="20"/>
<use href="#mirg" x="307" y="428.4" width="18.8" height="18.8"/>
<path d="M289.8 456.4 L294.2 460 L289.8 463.6 Z" fill="#1e1e1e"/>
<use href="#cutg" x="308.6" y="451.2" width="15.6" height="17.6"/>
</svg>
<svg id="model" style="left:0;top:0;" width="976" height="617" viewBox="0 0 976 617">
<defs><radialGradient id="ball" cx="40%" cy="35%" r="65%"><stop offset="0" stop-color="#7cc4ff"/><stop offset="0.6" stop-color="#3d97ea"/><stop offset="1" stop-color="#2a7fd0"/></radialGradient></defs>
<g stroke="#000" stroke-width="1.1" stroke-linejoin="round">
<polygon points="420.00,287.00 550.50,361.25 550.50,531.00 420.00,456.00" fill="#53555f"/>
<polygon points="465.75,259.50 596.25,335.60 550.50,361.25 420.00,287.00" fill="#a2a5be"/>
<polygon points="550.50,361.25 596.25,335.60 596.60,459.00 822.00,329.25 898.00,135.40 931.25,138.10 845.25,360.75 550.50,531.00" fill="#7f8297"/>
<polygon points="574.00,321.60 691.75,254.25 822.00,329.25 596.60,459.00 596.25,335.60" fill="#a2a5be"/>
<path d="M823 93.2 Q842 93.6 864 98.9 L931.25 138.1 L898 135.4 L832 97.5 Z" fill="#a2a5be"/>
<path d="M691.75 254.25 L769.6 124.8 C776 112 785 101.5 796 96 C805 91.8 814 91.6 823 93.2 L832 97.5 L898 135.4 L822 329.25 Z" fill="#696b7c"/>
</g>
<g fill="none" stroke="#fafa00" stroke-width="2.1" stroke-linejoin="round" stroke-linecap="round">
<path d="M832 97.5 L866 100"/>
<path d="M832 97.5 C846 110 854 125 857.5 140 C859.5 150 859 158 857.2 164.7 L822 329"/>
<path d="M866 100 C880 109 889 124 892.5 138 C894.5 148 893.5 156 891.3 163.7 L855.75 332"/>
<path d="M857.2 164.7 L889.5 168"/>
<path d="M822 329 L855.75 332"/>
</g>
<g fill="none" stroke="#47a0f2" stroke-width="1.5">
<path d="M466.25 298.75 L885.25 57 V111"/>
<path d="M466.25 298.75 V514.5 L493 499"/>
<path d="M885.25 256 V272.75"/>
</g>
<g fill="none" stroke="#5aabf3" stroke-width="1.05" stroke-dasharray="3.4 3.6">
<path d="M493 499 L879 276.4"/>
<path d="M885.25 111 V256" stroke-opacity="0.8"/>
</g>
<circle cx="466.25" cy="298.75" r="3.9" fill="url(#ball)" opacity="1"/>
<circle cx="885.25" cy="57" r="3.9" fill="url(#ball)" opacity="1"/>
<circle cx="885.25" cy="272.75" r="3.9" fill="url(#ball)" opacity="1"/>
<circle cx="466.25" cy="514.5" r="3.9" fill="url(#ball)" opacity="1"/>
<circle cx="675.5" cy="178" r="3.9" fill="url(#ball)" opacity="1"/>
<circle cx="466.25" cy="406.8" r="3.9" fill="url(#ball)" opacity="1"/>
<circle cx="675.5" cy="393.7" r="3.9" fill="url(#ball)" opacity="0.65"/>
<circle cx="885.25" cy="164.5" r="3.9" fill="url(#ball)" opacity="0.45"/>
<text transform="matrix(1.0431 -0.6019 0 1 468.9 316.6)" x="0" y="0" font-family="Liberation Sans, sans-serif" font-style="italic" font-size="17.5" letter-spacing="0.6" fill="none" stroke="#dbe6f5" stroke-opacity="0.75" stroke-width="2.2" stroke-linejoin="round">Right Plane</text>
<text transform="matrix(1.0431 -0.6019 0 1 468.9 316.6)" x="0" y="0" font-family="Liberation Sans, sans-serif" font-style="italic" font-size="17.5" letter-spacing="0.6" fill="#4fa5f6" stroke="#4fa5f6" stroke-width="0.55">Right Plane</text>
<defs><linearGradient id="gy" x1="0" y1="0" x2="1" y2="0"><stop offset="0" stop-color="#0a5f14"/><stop offset="0.45" stop-color="#2f9a3a"/><stop offset="1" stop-color="#0a5f14"/></linearGradient></defs>
<path d="M301.8 598.8 L288 606.7" stroke="#1818c4" stroke-width="3.6"/>
<path d="M301.8 598.8 L315.6 606.7" stroke="#a81616" stroke-width="3.6"/>
<rect x="299.7" y="584" width="4.3" height="15.6" fill="url(#gy)"/>
<path d="M301.8 576 L306.9 582.6 Q305 585.4 301.8 585.4 Q298.6 585.4 297 582.6 Z" fill="url(#gy)"/>
<path d="M280 612.4 L285.3 604.1 Q288.6 605.4 289.8 608.4 Q290.4 610.6 289.7 612.6 Z" fill="#2222d8"/>
<path d="M323.4 612.4 L318.3 604.1 Q315 605.4 313.8 608.4 Q313.2 610.6 314.1 612.6 Z" fill="#c22020"/>
<path d="M318.6 606 L321.8 611.2 L316.4 611.4 Z" fill="#e65050" opacity="0.7"/>
<path d="M285 606 L282 611.2 L287 611.4 Z" fill="#5a5af0" opacity="0.7"/>
<text transform="translate(297.7 575) scale(0.9 1)" font-family="Liberation Sans, sans-serif" font-size="12.5" fill="#0a8a1a">Y</text>
<text transform="translate(322.8 618.2) scale(0.7 1)" font-family="Liberation Sans, sans-serif" font-size="12.5" fill="#f01010">X</text>
<text transform="translate(274.6 618.2) scale(0.72 1)" font-family="Liberation Sans, sans-serif" font-size="12.5" fill="#1010f0">Z</text>
</svg>
</div>
</body>
</html>
